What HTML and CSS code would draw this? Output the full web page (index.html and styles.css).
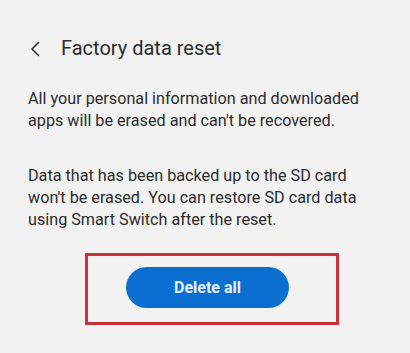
FILE: index.html
```html
<!DOCTYPE html>
<html>
<head>
<meta charset="utf-8">
<link rel="stylesheet" href="styles.css">
</head>
<body>
<div class="screen">
  <header class="header">
    <svg class="back" width="10" height="16" viewBox="0 0 10 16"><path d="M8.5 1.5 L2 8 L8.5 14.5" fill="none" stroke="#2b2b2b" stroke-width="1.6" stroke-linecap="round" stroke-linejoin="round"/></svg>
    <h1 class="title">Factory data reset</h1>
  </header>
  <main class="content">
    <p class="para">All your personal information and downloaded apps will be erased and can't be recovered.</p>
    <p class="para second">Data that has been backed up to the SD card won't be erased. You can restore SD card data using Smart Switch after the reset.</p>
  </main>
  <div class="highlight">
    <button class="delete">Delete all</button>
  </div>
</div>
</body>
</html>
```
FILE: styles.css
```css
html, body {
  margin: 0;
  padding: 0;
  background: #f2f2f2;
}
.screen {
  width: 410px;
  height: 353px;
  font-family: Roboto, "Noto Sans", sans-serif;
  color: #2b2b2b;
}
.header {
  display: flex;
  align-items: center;
  padding: 36px 0 0 30px;
  height: 24px;
}
.back {
  display: block;
  width: 10px;
  height: 16px;
  margin-top: 1px;
}
.title {
  margin: 0 0 0 21px;
  font-size: 20px;
  line-height: 24px;
  font-weight: 400;
  letter-spacing: 0;
}
.content {
  padding: 28px 0 0 28px;
}
.para {
  margin: 0;
  font-size: 16.2px;
  line-height: 22px;
  width: 338px;
}
.second {
  margin-top: 33px;
}
.highlight {
  margin: 22px 0 0 85px;
  width: 248px;
  height: 66px;
  border: 3px solid #c8323b;
  padding: 0;
  display: flex;
  align-items: flex-start;
}
.delete {
  margin: 11px 0 0 38px;
  width: 163px;
  height: 41px;
  border: none;
  border-radius: 21px;
  background: #0b6fd1;
  color: #e8f4ff;
  font-family: Roboto, "Noto Sans", sans-serif;
  font-size: 16px;
  font-weight: 700;
  padding: 0;
}
```
